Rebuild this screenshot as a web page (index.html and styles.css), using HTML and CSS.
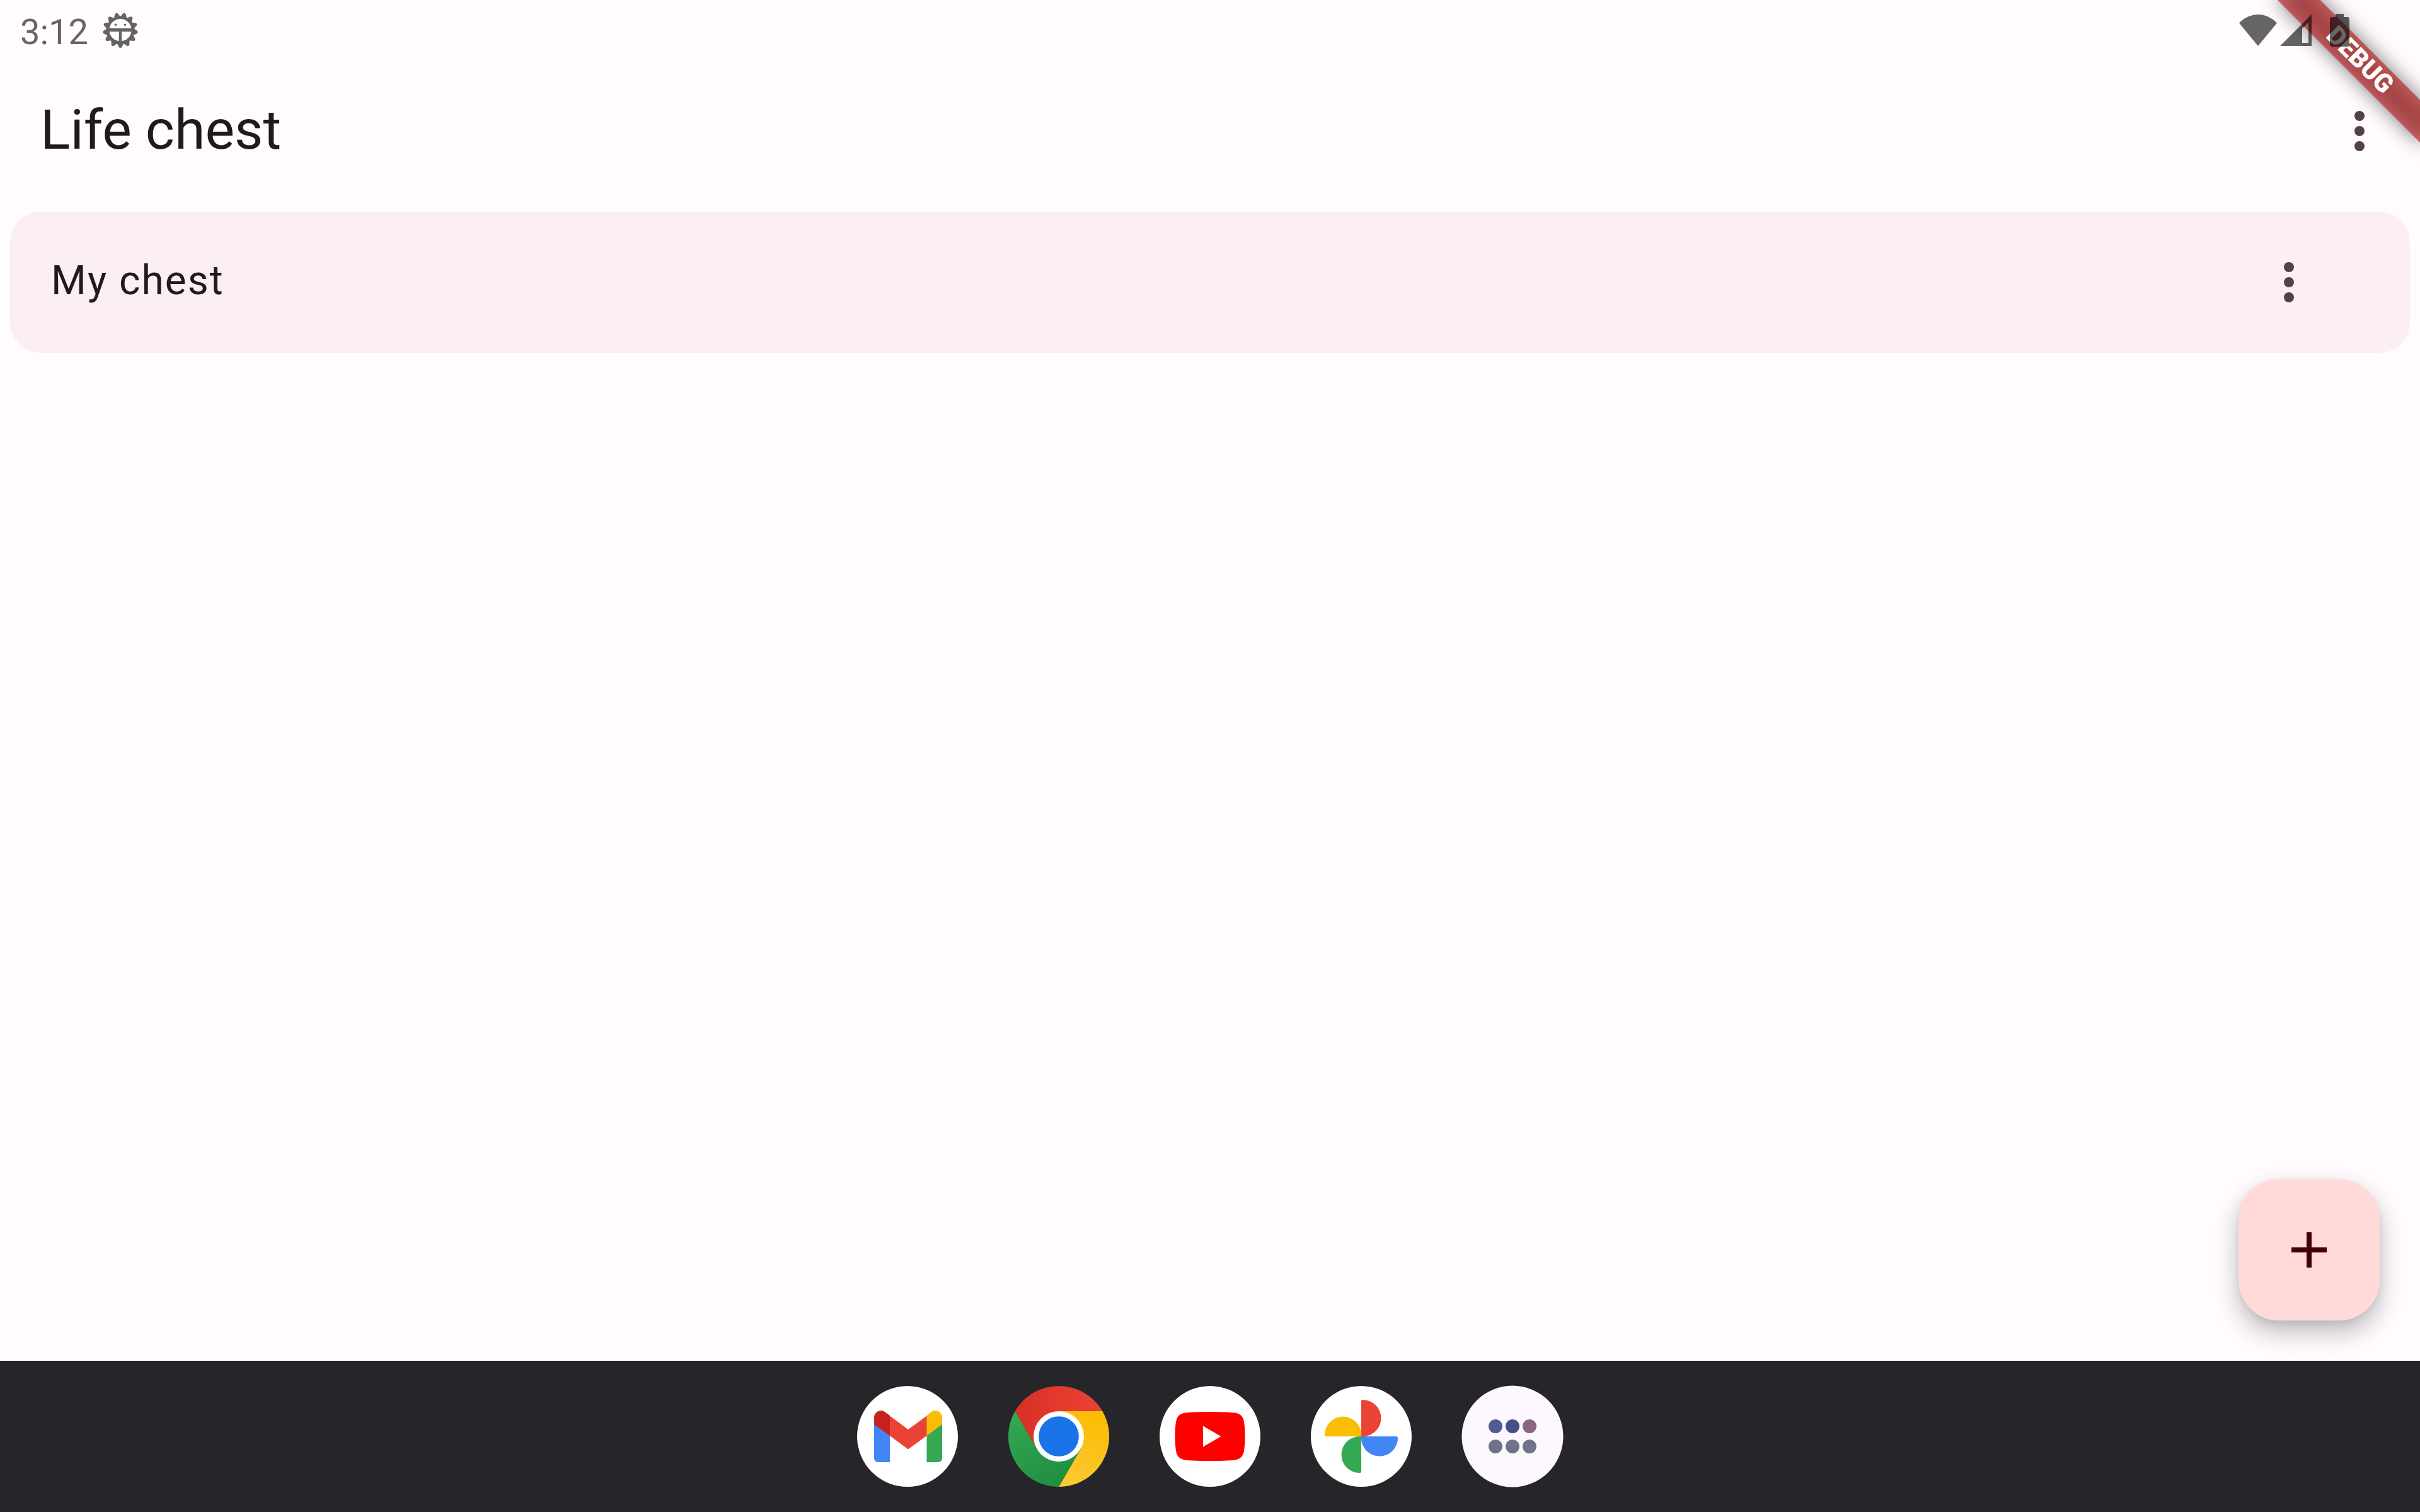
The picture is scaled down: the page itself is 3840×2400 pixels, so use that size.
FILE: index.html
```html
<!DOCTYPE html>
<html lang="en">
<head>
<meta charset="utf-8">
<title>Life chest</title>
<link rel="stylesheet" href="styles.css">
</head>
<body>
<div class="screen">
  <header class="status-bar">
    <div class="status-left">
      <span class="clock">3:12</span>
      <svg class="bug" viewBox="-28 -28 56 56">
        <defs><path id="tooth" d="M-6-19.500L-2.900-25.500Q-2.200-28 0-28Q2.200-28 2.900-25.500L6-19.500Z"/></defs>
        <g>
          <use href="#tooth" transform="rotate(13.85)"/><use href="#tooth" transform="rotate(41.54)"/>
          <use href="#tooth" transform="rotate(69.23)"/><use href="#tooth" transform="rotate(96.92)"/>
          <use href="#tooth" transform="rotate(124.62)"/><use href="#tooth" transform="rotate(152.31)"/>
          <use href="#tooth" transform="rotate(180)"/><use href="#tooth" transform="rotate(207.69)"/>
          <use href="#tooth" transform="rotate(235.38)"/><use href="#tooth" transform="rotate(263.08)"/>
          <use href="#tooth" transform="rotate(290.77)"/><use href="#tooth" transform="rotate(318.46)"/>
          <use href="#tooth" transform="rotate(346.15)"/>
          <path fill-rule="evenodd" d="M0-22.5a22.5 22.5 0 1 0 .01 0ZM-17.4-3A17.6 17.6 0 0 1 17.4-3ZM-17.4 2.3H-2.2V17.3A17.6 17.6 0 0 1-17.4 2.3ZM17.4 2.3H2.2V17.3A17.6 17.6 0 0 0 17.4 2.3Z"/>
          <circle cx="-7.5" cy="-8.7" r="1.8"/><circle cx="7.5" cy="-8.7" r="1.8"/>
        </g>
      </svg>
    </div>
    <div class="status-right">
      <svg class="wifi" viewBox="0 0 60 50"><path d="M0 13.5Q13 0 30 0T60 13.5L30 50Z"/></svg>
      <svg class="signal" viewBox="0 0 50 50"><path fill-rule="evenodd" d="M0 50L50 0V50ZM35 22.5V45H45V12.5Z"/></svg>
      <svg class="battery" viewBox="0 0 31 52"><path d="M9 0H22V5H28Q31 5 31 8V49Q31 52 28 52H3Q0 52 0 49V8Q0 5 3 5H9Z"/></svg>
    </div>
  </header>
  <div class="app-bar">
    <h1 class="title">Life chest</h1>
    <svg class="more" viewBox="0 0 96 96"><circle cx="48" cy="24" r="8"/><circle cx="48" cy="48" r="8"/><circle cx="48" cy="72" r="8"/></svg>
  </div>
  <main class="content">
    <div class="card">
      <span class="card-title">My chest</span>
      <svg class="more" viewBox="0 0 96 96"><circle cx="48" cy="24" r="8"/><circle cx="48" cy="48" r="8"/><circle cx="48" cy="72" r="8"/></svg>
    </div>
  </main>
  <nav class="taskbar">
    <svg class="app" viewBox="0 0 160 160">
      <circle cx="80" cy="80" r="80" fill="#fff"/>
      <path fill="#4285f4" d="M27 60L52 78V121H34Q27 121 27 114Z"/>
      <path fill="#34a853" d="M135 60L110.500 78V121H128Q135 121 135 114Z"/>
      <path fill="#ea4335" d="M51.500 47L81 69L111 47V78.500L81 100.500L51.500 78.500Z"/>
      <path fill="#c5221f" d="M27 61V50A11 11 0 0 1 44.700 41.500L52 47V79Z"/>
      <path fill="#fbbc04" d="M135 61V50A11 11 0 0 0 117.300 41.500L110.500 47V79Z"/>
    </svg>
    <svg class="app" viewBox="0 0 160 160">
      <defs>
        <linearGradient id="cr" x1="0" x2="1"><stop offset="0" stop-color="#d93025"/><stop offset="1" stop-color="#ea4335"/></linearGradient>
        <linearGradient id="cy" x1=".6" y1="0" x2=".3" y2="1"><stop offset="0" stop-color="#fbbc04"/><stop offset="1" stop-color="#fcc934"/></linearGradient>
        <linearGradient id="cg" x1=".1" y1="0" x2=".7" y2="1"><stop offset="0" stop-color="#34a853"/><stop offset="1" stop-color="#1e8e3e"/></linearGradient>
      </defs>
      <path fill="url(#cr)" d="M10.720 40A80 80 0 0 1 149.280 40H80L45.360 100Z"/>
      <path fill="url(#cy)" d="M149.280 40A80 80 0 0 1 80 160L114.640 100L80 40Z"/>
      <path fill="url(#cg)" d="M80 160A80 80 0 0 1 10.720 40L45.360 100H114.640Z"/>
      <circle cx="80" cy="80" r="40" fill="#fff"/>
      <circle cx="80" cy="80" r="31.800" fill="#1a73e8"/>
    </svg>
    <svg class="app" viewBox="0 0 160 160">
      <circle cx="80" cy="80" r="80" fill="#fff"/>
      <path fill="red" d="M80 41Q110 41 122 43Q132.500 45.500 134 57Q135.500 66 135.500 80T134 103Q132.500 114.500 122 117Q110 119 80 119T38 117Q27.500 114.500 26 103Q24.500 94 24.500 80T26 57Q27.500 45.500 38 43Q50 41 80 41Z"/>
      <path fill="#fff" d="M69 63.500L97.500 80L69 96.500Z"/>
    </svg>
    <svg class="app" viewBox="0 0 160 160">
      <circle cx="80" cy="80" r="80" fill="#fff"/>
      <path fill="#ea4335" d="M80 80V24.500Q80 22 82.500 22A29 29 0 0 1 82.500 80Z"/>
      <path fill="#4285f4" d="M80 80H135.500Q138 80 138 82.500A29 29 0 0 1 80 82.500Z"/>
      <path fill="#34a853" d="M80 80V135.500Q80 138 77.500 138A29 29 0 0 1 77.500 80Z"/>
      <path fill="#fbbc04" d="M80 80H24.500Q22 80 22 77.500A29 29 0 0 1 80 77.500Z"/>
    </svg>
    <svg class="app" viewBox="0 0 160 160">
      <circle cx="80" cy="80" r="80.500" fill="#fdf8ff"/>
      <circle cx="53" cy="64" r="11" fill="#515b92"/><circle cx="80" cy="64" r="11" fill="#444f86"/><circle cx="107" cy="64" r="11" fill="#8c6680"/>
      <g fill="#6f7388"><circle cx="53" cy="96" r="11"/><circle cx="80" cy="96" r="11"/><circle cx="107" cy="96" r="11"/></g>
    </svg>
  </nav>
  <button class="fab" aria-label="Add"><svg class="plus" viewBox="0 0 56 56"><path d="M24 0H32V24H56V32H32V56H24V32H0V24H24Z"/></svg></button>
  <div class="banner-shadow"></div>
  <div class="banner">DEBUG</div>
</div>
</body>
</html>
```
FILE: styles.css
```css
* { box-sizing: border-box; }
body { margin: 0; font-family: Roboto, sans-serif; color: #201a1a; }
svg { display: block; flex: none; overflow: visible; }
.screen {
  position: relative;
  width: 3840px;
  height: 2400px;
  overflow: hidden;
  display: flex;
  flex-direction: column;
  background: #fffbff;
}
.status-bar {
  position: relative;
  z-index: 3;
  height: 96px;
  display: flex;
  align-items: center;
  justify-content: space-between;
  padding: 0 112px 0 32px;
  color: rgba(0, 0, 0, .6);
  fill: rgba(0, 0, 0, .6);
}
.status-left { display: flex; align-items: center; gap: 23px; }
.clock { font-size: 56px; line-height: 66px; padding-top: 5px; }
.bug { width: 56px; height: 56px; }
.bug g { fill: #000; opacity: .6; }
.status-right { display: flex; align-items: flex-start; height: 50px; }
.wifi { width: 60px; height: 50px; margin-right: 5px; }
.signal { width: 50px; height: 50px; margin-right: 29px; }
.battery { width: 31px; height: 52px; margin-top: -1px; }
.app-bar {
  height: 224px;
  display: flex;
  align-items: center;
  justify-content: space-between;
  padding: 0 48px 0 64px;
}
.title { margin: 0; padding-bottom: 4px; font-size: 88px; line-height: 112px; font-weight: 400; }
.more { width: 96px; height: 96px; fill: #524343; }
.content { flex: 1; padding: 16px; }
.card {
  height: 224px;
  display: flex;
  align-items: center;
  justify-content: space-between;
  padding: 0 144px 0 65px;
  border-radius: 48px;
  background: #fbeef4;
}
.card-title { padding-bottom: 4px; font-size: 64px; line-height: 96px; letter-spacing: 2px; }
.taskbar {
  height: 240px;
  display: flex;
  align-items: center;
  justify-content: center;
  gap: 80px;
  background: #26252a;
}
.app { width: 160px; height: 160px; }
.fab {
  position: absolute;
  right: 64px;
  bottom: 304px;
  width: 224px;
  height: 224px;
  display: grid;
  place-items: center;
  padding: 0;
  border: 0;
  border-radius: 64px;
  background: #ffdad9;
  box-shadow: 0 18px 40px rgba(0, 0, 0, .27), 0 4px 12px rgba(0, 0, 0, .06);
}
.plus { width: 56px; height: 56px; fill: #40000a; }
.banner, .banner-shadow {
  position: absolute;
  left: 3680px;
  top: 112px;
  width: 320px;
  height: 48px;
  transform-origin: 160px -112px;
  transform: rotate(45deg);
}
.banner-shadow { background: rgba(0, 0, 0, .5); filter: blur(15.86px); z-index: 1; }
.banner {
  z-index: 2;
  background: rgba(183, 28, 28, .627);
  color: #fff;
  font-size: 40.8px;
  line-height: 44px;
  font-weight: 900;
  text-align: center;
}
```
